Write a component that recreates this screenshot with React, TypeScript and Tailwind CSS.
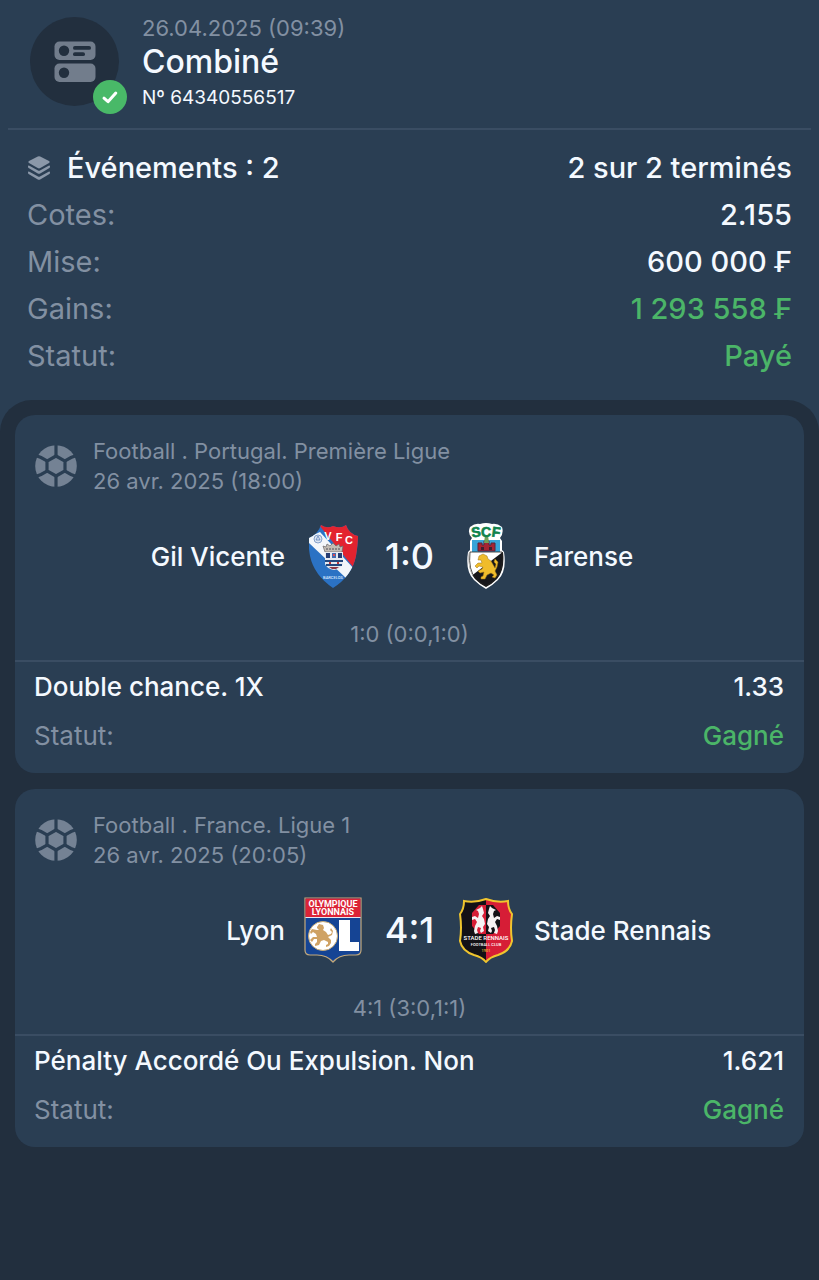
import { FC, ReactNode } from "react";

const CouponIcon: FC = () => (
  <svg viewBox="0 0 42 42" className="size-[42px]" aria-hidden="true">
    <rect x="0.5" y="0.5" width="41" height="18.5" rx="5" fill="#727d8c" />
    <rect x="0.5" y="22.5" width="41" height="18.5" rx="5" fill="#727d8c" />
    <circle cx="10" cy="9.8" r="5.2" fill="#222f3e" />
    <circle cx="10" cy="31.8" r="5.2" fill="#222f3e" />
    <rect x="19" y="5" width="18" height="3.8" rx="1.9" fill="#222f3e" />
    <rect x="19" y="11.3" width="12" height="3.8" rx="1.9" fill="#222f3e" />
  </svg>
);

const CheckIcon: FC = () => (
  <svg viewBox="0 0 18 18" className="size-[18px]" aria-hidden="true">
    <path
      d="M3 10.2 7 13.7 14.8 5"
      fill="none"
      stroke="#fff"
      strokeWidth="3"
      strokeLinecap="round"
      strokeLinejoin="round"
    />
  </svg>
);

const LayersIcon: FC = () => (
  <svg viewBox="0 0 24 24" className="size-6" fill="#8b98a9" aria-hidden="true">
    <path d="M10.8.6a3 3 0 0 1 2.4 0l8.800 4.400q1.600.9 0 1.900l-8.700 5.200a3 3 0 0 1-2.600 0L2 6.900q-1.600-1 0-1.900z" />
    <path d="M1 10.400q0-1.200 1.400-.6L11 14.600a2.300 2.300 0 0 0 2 0l8.600-4.800q1.400-.6 1.400.6c0 1-.3 1.400-1 1.800l-8.800 5.200a2.500 2.500 0 0 1-2.400 0L2 12.200c-.7-.4-1-.8-1-1.800z" />
    <path d="M1 16.400q0-1.200 1.400-.6L11 20.600a2.300 2.300 0 0 0 2 0l8.600-4.800q1.400-.6 1.400.6c0 1-.3 1.400-1 1.800l-8.800 5.200a2.500 2.500 0 0 1-2.400 0L2 18.200c-.7-.4-1-.8-1-1.800z" />
  </svg>
);

const BallIcon: FC = () => (
  <svg viewBox="0 0 42 42" className="size-[42px] shrink-0" aria-hidden="true">
    <circle cx="21" cy="21" r="20.800" fill="#748294" />
    <g stroke="#2a3e53" strokeWidth="3.2" fill="none">
      <path d="M21 0v13M21 29v13M0 10.200l6 2.300 6 3.300M42 10.200l-6 2.300-6 3.300M0 31.800l6-2.300 6-3.300M42 31.800l-6-2.300-6-3.300" />
      <path
        d="m21 11 9 5.200v9.600L21 31l-9-5.200v-9.600z"
        fill="#748294"
        strokeLinejoin="round"
      />
    </g>
  </svg>
);

const GilVicenteCrest: FC = () => (
  <svg viewBox="0 0 49 63" className="h-[63px] w-[49px]" role="img" aria-label="Gil Vicente">
    <defs>
      <clipPath id="gil-shield">
        <path d="M0 13Q9 9 12 0q6 4 12 1 8 3 13-1 3 9 12 11 0 8-2 20-4 20-23 32Q5 50 1 31-1 20 0 13z" />
      </clipPath>
    </defs>
    <g clipPath="url(#gil-shield)">
      <rect width="49" height="63" fill="#2b72c4" />
      <path d="M10 0h39v48z" fill="#e3232f" />
      <path d="M0 12 11 7l35 38-7 10L0 18z" fill="#f3f6fa" />
    </g>
    <circle cx="9" cy="14" r="4" fill="#dce5f1" stroke="#6c8dc0" strokeWidth="0.8" />
    <path d="m7 15 2-4 2 4z" fill="none" stroke="#4f76b5" strokeWidth="0.7" />
    <g
      fill="#fff"
      fontFamily="Liberation Sans, sans-serif"
      fontWeight="700"
      fontSize="11"
      textAnchor="middle"
    >
      <text x="19" y="15">V</text>
      <text x="30" y="16">F</text>
      <text x="40" y="19">C</text>
    </g>
    <path
      d="M14 21l3 1 1-3 3 2 3-3 3 3 3-2 1 3 3-1-1 6H16z"
      fill="#c3bdb5"
      stroke="#6b6669"
      strokeWidth="0.7"
    />
    <path d="M17 24h15" stroke="#524e58" strokeDasharray="2 1" />
    <path d="M16 27h18v12q-2 5-9 6-7-1-9-6z" fill="#e5e9ef" />
    <path d="M17 28h4v5h-4zM29 28h4v5h-4z" fill="#263d72" />
    <path d="M23 28h4v5h-4z" fill="#426bb0" />
    <path d="M24 29h2v2h-2z" fill="#d94c54" />
    <path d="M16 35h18v2H16zM17 39h16v2H17z" fill="#23487f" />
    <path d="M20 37h2v2h-2zM28 37h2v2h-2z" fill="#b9353d" />
    <path d="M20 42h10l-3 2h-4z" fill="#8b3545" />
    <text
      x="24"
      y="54"
      fill="#dceaff"
      fontFamily="Roboto, sans-serif"
      fontSize="4"
      textAnchor="middle"
    >
      BARCELOS
    </text>
  </svg>
);

const FarenseCrest: FC = () => (
  <svg viewBox="0 0 40 66" className="h-[66px] w-10" role="img" aria-label="Farense">
    <defs>
      <clipPath id="farense-shield">
        <path d="M3 29h34q2 18-6 27-5 5-11 8-6-3-11-8Q1 47 3 29z" />
      </clipPath>
    </defs>
    <path
      d="M4 4q5-4 10-3 6-2 12 0 5-1 10 3 2 6-2 11l2 3v9l2 2q3 19-6 28-5 5-12 9-7-4-12-9Q-1 48 2 29l2-2v-9l2-3Q1 10 4 4z"
      fill="#fff"
    />
    <path d="M6 17h28v12H6z" fill="#38a4d8" />
    <g clipPath="url(#farense-shield)">
      <rect y="28" width="40" height="38" fill="#17171b" />
      <path d="M0 28h38L0 57z" fill="#fff" />
    </g>
    <path
      d="M4 29h32q2 18-6 27-4 4-10 7-6-3-10-7Q2 47 4 29z"
      fill="none"
      stroke="#26231f"
      strokeWidth="0.8"
    />
    <path
      d="M12 20h4v2h2v-4h5v4h2v-2h4v8H12z"
      fill="#a62432"
      stroke="#59243a"
      strokeWidth="1"
    />
    <path d="M15 24h3v3h-3zM23 24h3v3h-3z" fill="#3c2030" />
    <path d="M19 12h3l1 8h-5z" fill="#72a05a" />
    <g
      fill="#11834c"
      stroke="#11834c"
      strokeWidth="0.600"
      fontFamily="Liberation Sans, sans-serif"
      fontWeight="700"
      fontSize="14"
      textAnchor="middle"
    >
      <text x="10" y="14" transform="rotate(-8 10 10)">S</text>
      <text x="20" y="14">C</text>
      <text x="30" y="14" transform="rotate(8 30 10)">F</text>
    </g>
    <path
      d="M13 33l4-2 4 2 1 3 3 2 4 7 1-4-2-2 1-3 3 3-1 5-2 4 2 4-2 3-3-1 2-2-3-2-4 2-2 4h-4v-2l2-1 1-4-4 1-2-2 4-2 1-2-4-1-2 2-2-2 3-3h4l-1-3h-3z"
      fill="#f0bc2b"
      stroke="#9c7219"
      strokeWidth="0.500"
    />
  </svg>
);

const LyonCrest: FC = () => (
  <svg viewBox="0 0 58 66" className="h-[66px] w-[58px]" role="img" aria-label="Lyon">
    <path
      d="M1 1h56v52q0 5-5 5h-7q-10 0-16 7-6-7-16-7H6q-5 0-5-5z"
      fill="#154494"
      stroke="#c5aa7b"
      strokeWidth="1.200"
    />
    <path d="M1.500 1.500h55V20h-55z" fill="#dc2436" />
    <path d="M1.500 20.500h55" stroke="#e6e9f2" strokeWidth="1" />
    <g
      fill="#fff"
      fontFamily="Roboto, sans-serif"
      fontWeight="700"
      fontSize="9"
      textAnchor="middle"
    >
      <text x="29" y="10">OLYMPIQUE</text>
      <text x="29" y="18">LYONNAIS</text>
    </g>
    <circle cx="19" cy="39" r="14.500" fill="#fff" stroke="#c8aa73" strokeWidth="1" />
    <path
      d="M13 30l2-3 4 1 1 3-1 2 3 2 2 3 3-1 1-2-2-2 1-2 2 3-1 4-4 2 3 3v3l-2 3-3 1 0-2 2-1v-2l-4-2-3 1-2 4-4 1 0-2 2-2v-3l-3 0-2 3-2-2 3-3 4 0-1-3-3-2-2 2-1-2 2-3 5 1 2 0-2-2z"
      fill="#cfa264"
    />
    <path d="M35 23h11v22h9v9H35z" fill="#fff" />
  </svg>
);

const RennesCrest: FC = () => (
  <svg viewBox="0 0 56 66" className="h-[66px] w-14" role="img" aria-label="Stade Rennais">
    <defs>
      <clipPath id="rennes-shield">
        <path d="M6 4q11 2 22-2 11 4 22 2 0 8 4 13-2 14 0 27-2 10-14 14-8 2-12 7-4-5-12-7Q4 54 2 44 4 31 2 17 6 12 6 4z" />
      </clipPath>
    </defs>
    <g clipPath="url(#rennes-shield)">
      <rect width="28" height="66" fill="#131116" />
      <rect x="28" width="28" height="66" fill="#d61d36" />
    </g>
    <path
      d="M6 4q11 2 22-2 11 4 22 2 0 8 4 13-2 14 0 27-2 10-14 14-8 2-12 7-4-5-12-7Q4 54 2 44 4 31 2 17 6 12 6 4z"
      fill="none"
      stroke="#f0c52e"
      strokeWidth="2"
    />
    <path d="M28 8h-7l-7 8v13l7 8h7z" fill="#d61d36" />
    <path d="M28 8h7l7 8v13l-7 8h-7z" fill="#131116" />
    <g fill="#f5f2f3">
      <path
        id="ermine"
        d="M18 13l4-2 2-2 1 3 1 4-2 3 2 3 1 5-2 3 1 4-3 2-1-2 1-3-3-1-1 3 1 3-3 1-1-3 1-5 2-4-2-3-3 1v-3l3-1 3 2 1-4-1-3z"
      />
      <use href="#ermine" transform="matrix(-1 0 0 1 56 0)" />
    </g>
    <g fill="#fff" fontFamily="Roboto, sans-serif" textAnchor="middle">
      <text x="28" y="43" fontSize="6">STADE RENNAIS</text>
      <text x="28" y="49" fontSize="4">FOOTBALL CLUB</text>
      <text x="28" y="55" fontSize="4" fill="#e9bf35">1901</text>
    </g>
  </svg>
);

const summary = [
  { label: "Cotes:", value: "2.155", won: false },
  { label: "Mise:", value: "600 000 ₣", won: false },
  { label: "Gains:", value: "1 293 558 ₣", won: true },
  { label: "Statut:", value: "Payé", won: true },
];

interface Event {
  league: string;
  date: string;
  home: string;
  away: string;
  homeCrest: ReactNode;
  awayCrest: ReactNode;
  score: string;
  detail: string;
  bet: string;
  odds: string;
}

const events: Event[] = [
  {
    league: "Football . Portugal. Première Ligue",
    date: "26 avr. 2025 (18:00)",
    home: "Gil Vicente",
    away: "Farense",
    homeCrest: <GilVicenteCrest />,
    awayCrest: <FarenseCrest />,
    score: "1:0",
    detail: "1:0 (0:0,1:0)",
    bet: "Double chance. 1X",
    odds: "1.33",
  },
  {
    league: "Football . France. Ligue 1",
    date: "26 avr. 2025 (20:05)",
    home: "Lyon",
    away: "Stade Rennais",
    homeCrest: <LyonCrest />,
    awayCrest: <RennesCrest />,
    score: "4:1",
    detail: "4:1 (3:0,1:1)",
    bet: "Pénalty Accordé Ou Expulsion. Non",
    odds: "1.621",
  },
];

const EventCard: FC<{ event: Event }> = ({ event }) => (
  <article className="rounded-[20px] bg-[#2a3e53]">
    <div className="flex items-center gap-4 px-5 pt-[21px] text-[22px] leading-[30px] text-[#8290a2]">
      <BallIcon />
      <div>
        <p>{event.league}</p>
        <p>{event.date}</p>
      </div>
    </div>
    <div className="mt-5 grid h-20 grid-cols-[1fr_auto_1fr] items-center gap-4 text-[26px] font-medium text-[#f4f9ff]">
      <span className="text-right">{event.home}</span>
      <div className="flex items-center">
        <span className="flex w-16 justify-center">{event.homeCrest}</span>
        <span className="w-[89px] text-center text-[36px]">{event.score}</span>
        <span className="flex w-16 justify-center">{event.awayCrest}</span>
      </div>
      <span>{event.away}</span>
    </div>
    <p className="mt-[22px] pb-[10px] text-center text-[22px] leading-8 text-[#8290a2]">
      {event.detail}
    </p>
    <div className="flex flex-col gap-[17px] border-t-2 border-[#3a4d63] pt-[9px] pr-5 pb-[21px] pl-[19px] text-[26px] leading-8">
      <div className="flex justify-between font-medium text-[#f4f9ff]">
        <span>{event.bet}</span>
        <span>{event.odds}</span>
      </div>
      <div className="flex justify-between">
        <span className="text-[#8290a2]">Statut:</span>
        <span className="font-medium text-[#4bb568]">Gagné</span>
      </div>
    </div>
  </article>
);

const App: FC = () => {
  return (
    <main className="flex min-h-screen flex-col bg-[#2a3e53] font-['Inter','Liberation_Sans',sans-serif]">
      <header className="mx-2 flex items-start gap-[23px] border-b-2 border-[#3a4d63] px-[22px] py-3">
        <div className="relative mt-[5px] flex size-[89px] items-center justify-center rounded-full bg-[#222f3e]">
          <CouponIcon />
          <span className="absolute -right-2 -bottom-2 flex size-[34px] items-center justify-center rounded-full bg-[#49b968]">
            <CheckIcon />
          </span>
        </div>
        <div className="text-[#f4f9ff]">
          <p className="text-[22px] leading-8 text-[#8290a2]">26.04.2025 (09:39)</p>
          <h1 className="text-[32px] leading-9 font-medium">Combiné</h1>
          <p className="text-[19px] leading-9">Nº 64340556517</p>
        </div>
      </header>
      <section className="px-[27px] pt-3.5 pb-[21px] text-[29px] leading-[47px]">
        <div className="flex items-center justify-between font-medium text-[#f4f9ff]">
          <h2 className="flex items-center gap-4">
            <LayersIcon />
            Événements : 2
          </h2>
          <span>2 sur 2 terminés</span>
        </div>
        {summary.map((row) => (
          <div key={row.label} className="flex justify-between">
            <span className="text-[#8290a2]">{row.label}</span>
            <span
              className={
                row.won ? "font-medium text-[#4bb568]" : "font-medium text-[#f4f9ff]"
              }
            >
              {row.value}
            </span>
          </div>
        ))}
      </section>
      <section className="flex grow flex-col gap-4 rounded-t-[32px] bg-[#222f3e] p-[15px]">
        {events.map((event) => (
          <EventCard key={event.home} event={event} />
        ))}
      </section>
    </main>
  );
};

export default App;
